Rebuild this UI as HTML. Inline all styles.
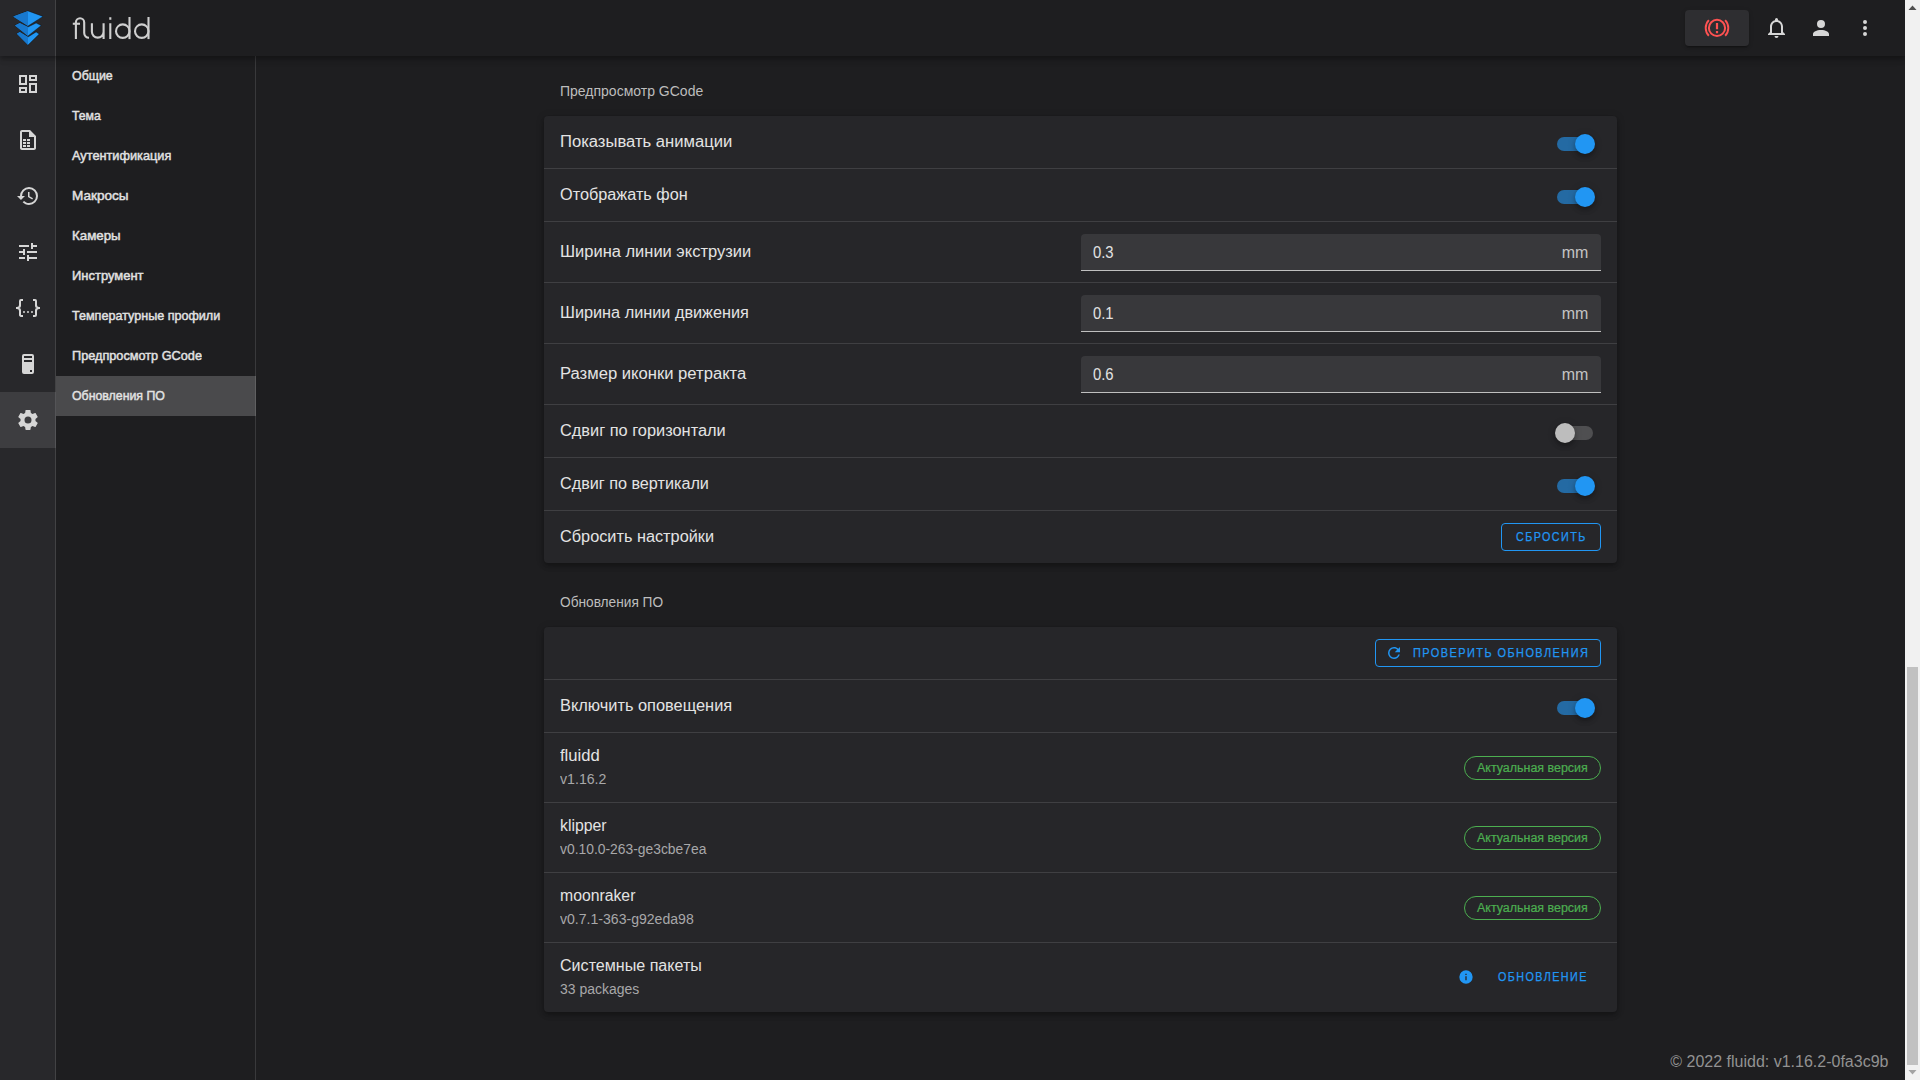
<!DOCTYPE html><html><head><meta charset="utf-8"><style>
*{box-sizing:border-box;margin:0;padding:0}
html,body{width:1920px;height:1080px;overflow:hidden;background:#1e1e20;font-family:"Liberation Sans",sans-serif;color:#e3e3e3}
.abs{position:absolute}
.t{display:inline-block;transform-origin:0 50%;white-space:nowrap}
#appbar{position:absolute;left:0;top:0;width:1905px;height:56px;background:#1e1e20;box-shadow:0 2px 4px -1px rgba(0,0,0,.2),0 4px 5px 0 rgba(0,0,0,.14),0 1px 10px 0 rgba(0,0,0,.12);z-index:5}
#logo{position:absolute;left:0;top:0;width:56px;height:56px;background:#28282b;border-right:1px solid rgba(255,255,255,.12)}
#rail{position:absolute;left:0;top:56px;width:56px;height:1024px;background:#28282b}
.ri{position:absolute;left:0;width:56px;height:56px}
.vb{position:absolute;top:0;width:1px;height:1024px;background:rgba(255,255,255,.12)}
#snav{position:absolute;left:56px;top:56px;width:200px;height:1024px;background:#1e1e20}
.si{position:absolute;left:0;width:200px;height:40px}
.si .tx{position:absolute;left:16px;font-size:13px;line-height:13px;font-weight:normal;-webkit-text-stroke:0.45px #e2e2e2;color:#e2e2e2;letter-spacing:0px;white-space:nowrap}
.si.act{background:#4a4a4c}
.hdr{position:absolute;left:560px;font-size:14px;line-height:14px;color:#bdbdbd;white-space:nowrap}
.card{position:absolute;left:544px;width:1073px;background:#262629;border-radius:4px;box-shadow:0 2px 4px -1px rgba(0,0,0,.2),0 4px 5px 0 rgba(0,0,0,.14),0 1px 10px 0 rgba(0,0,0,.12)}
.dv{position:absolute;left:0;width:1073px;height:1px;background:#3f3f42}
.lbl{position:absolute;left:16px;font-size:16px;line-height:16px;color:#e3e3e3;white-space:nowrap}
.sub{position:absolute;left:16px;font-size:14px;line-height:14px;color:#a8a8a9;white-space:nowrap}
.sw{position:absolute;left:1013px;width:36px;height:20px}
.sw .tr{position:absolute;left:0;top:3px;width:36px;height:14px;border-radius:8px;background:#246aa3}
.sw .th{position:absolute;left:18px;top:0;width:20px;height:20px;border-radius:50%;background:#2196f3;box-shadow:0 2px 4px -1px rgba(0,0,0,.2),0 4px 5px 0 rgba(0,0,0,.14),0 1px 10px 0 rgba(0,0,0,.12)}
.sw.off .tr{background:#4f4f51}
.sw.off .th{left:-2px;background:#bdbdbd}
.tf{position:absolute;left:537px;width:520px;height:37px;background:#38383b;border-radius:4px 4px 0 0;border-bottom:1px solid #bfbfbf}
.tf .v{position:absolute;left:12px;font-size:16px;line-height:16px;color:#e3e3e3;white-space:nowrap}
.tf .u{position:absolute;font-size:16px;line-height:16px;color:#c4c4c4;white-space:nowrap}
.btn{position:absolute;height:28px;border:1px solid #2196f3;border-radius:4px}
.btx{position:absolute;font-size:12px;line-height:12px;color:#2196f3;white-space:nowrap;-webkit-text-stroke:0.25px #2196f3;letter-spacing:1.6px}
.chip{position:absolute;left:920px;width:137px;height:24px;border:1px solid #4caf50;border-radius:12px}
.ctx{position:absolute;font-size:12px;line-height:12px;color:#4caf50;white-space:nowrap;-webkit-text-stroke:0.2px #4caf50}
</style></head><body>
<div id="appbar">
<div id="logo"><svg class="abs" style="left:0;top:0" width="56" height="56" viewBox="0 0 56 56">
<g stroke="rgba(0,0,0,0.35)" stroke-width="1" stroke-linejoin="round">
<path d="M16.8,33.7 L19.8,31.9 L28,37 L36.1,31.9 L39.2,34.1 L28,45.1 Z" fill="#2196f3"/>
<path d="M14.9,25.5 L19.8,23 L28,27 L36.1,23 L41.2,25.5 L28,35.9 Z" fill="#2196f3"/>
<path d="M28,10.9 L43,16.4 L28,26 L13.1,16.4 Z" fill="#2196f3"/>
</g>
<g fill="#1878cd">
<path d="M16.8,33.7 L19.8,31.9 L28,37 L28,45.1 Z"/>
<path d="M14.9,25.5 L19.8,23 L28,27 L28,35.9 Z"/>
<path d="M28,10.9 L13.1,16.4 L28,26 Z"/>
</g>
</svg></div>
<svg class="abs" style="left:0;top:0" width="160" height="56" viewBox="0 0 160 56" fill="none" stroke="#cfcfcf" stroke-width="2.1">
<path d="M75.9,39.1 V22.45 A4.15,4.15 0 0 1 84.2,22.45 V33 A4.8,4.8 0 0 0 89,37.8"/>
<path d="M72.8,23.75 H80"/>
<path d="M91.9,23.2 V31.8 A5.85,5.85 0 0 0 103.6,31.8 M103.6,23.2 V39.1"/>
<path d="M110.3,23.2 V39.1 M110.3,17.2 V19.8"/>
<circle cx="122.75" cy="31.15" r="6.75"/><path d="M129.5,17 V39.1"/>
<circle cx="141.75" cy="31.15" r="6.75"/><path d="M148.5,17 V39.1"/>
</svg>
<div class="abs" style="left:1685px;top:10px;width:64px;height:36px;border-radius:4px;background:#2e2e31;box-shadow:0 3px 1px -2px rgba(0,0,0,.2),0 2px 2px 0 rgba(0,0,0,.14),0 1px 5px 0 rgba(0,0,0,.12)">
<svg class="abs" style="left:20px;top:6px;overflow:visible" width="24" height="24" viewBox="0 0 24 24" fill="none" stroke="#ff5252" stroke-width="2">
<circle cx="12" cy="11.9" r="8.1"/>
<path d="M3.87,4.05 A11.3,11.3 0 0 0 3.87,19.75 M20.13,4.05 A11.3,11.3 0 0 1 20.13,19.75" stroke-width="1.9"/>
<path d="M12,7 V13.2 M12,15.1 V17.2" stroke-width="2.2"/>
</svg></div>
<svg class="abs" style="left:1765px;top:16px" width="24" height="24" viewBox="0 0 24 24"><path fill="#d6d6d6" d="M16,17H7V10.5C7,8 9,6 11.5,6C14,6 16,8 16,10.5M18,16V10.5C18,7.43 15.86,4.86 13,4.18V3.5A1.5,1.5 0 0,0 11.5,2A1.5,1.5 0 0,0 10,3.5V4.18C7.13,4.86 5,7.43 5,10.5V16L3,18V19H20V18M11.5,22A2,2 0 0,0 13.5,20H9.5A2,2 0 0,0 11.5,22Z"/></svg>
<svg class="abs" style="left:1809px;top:16px" width="24" height="24" viewBox="0 0 24 24"><path fill="#d6d6d6" d="M12,4A4,4 0 0,1 16,8A4,4 0 0,1 12,12A4,4 0 0,1 8,8A4,4 0 0,1 12,4M12,14C16.42,14 20,15.79 20,18V20H4V18C4,15.79 7.58,14 12,14Z"/></svg>
<svg class="abs" style="left:1853px;top:16px" width="24" height="24" viewBox="0 0 24 24"><path fill="#d6d6d6" d="M12,16A2,2 0 0,1 14,18A2,2 0 0,1 12,20A2,2 0 0,1 10,18A2,2 0 0,1 12,16M12,10A2,2 0 0,1 14,12A2,2 0 0,1 12,14A2,2 0 0,1 10,12A2,2 0 0,1 12,10M12,4A2,2 0 0,1 14,6A2,2 0 0,1 12,8A2,2 0 0,1 10,6A2,2 0 0,1 12,4Z"/></svg>
</div>
<div id="rail">
<div class="ri" style="top:336px;background:#3d3d40"></div>
<div class="vb" style="left:55px"></div>
<svg class="abs" style="left:16px;top:16px" width="24" height="24" viewBox="0 0 24 24"><path fill="#d6d6d6" d="M19,5V7H15V5H19M9,5V11H5V5H9M19,13V19H15V13H19M9,17V19H5V17H9M21,3H13V9H21V3M11,3H3V13H11V3M21,11H13V21H21V11M11,15H3V21H11V15Z"/></svg>
<svg class="abs" style="left:16px;top:72px" width="24" height="24" viewBox="0 0 24 24"><path fill="#d6d6d6" d="M14,2H6C4.9,2 4,2.9 4,4V20C4,21.1 4.9,22 6,22H18C19.1,22 20,21.1 20,20V8L14,2M18,20H6V4H13V9H18V20M7,11H10V13H7V11M11,11H14V13H11V11M7,14H10V16H7V14M11,14H14V16H11V14M7,17H10V19H7V17M11,17H14V19H11V17Z"/></svg>
<svg class="abs" style="left:16px;top:128px" width="24" height="24" viewBox="0 0 24 24"><path fill="#d6d6d6" d="M13.5,8H12V13L16.28,15.54L17,14.33L13.5,12.25V8M13,3A9,9 0 0,0 4,12H1L4.96,16.03L9,12H6A7,7 0 0,1 13,5A7,7 0 0,1 20,12A7,7 0 0,1 13,19C11.07,19 9.32,18.21 8.06,16.94L6.64,18.36C8.27,20 10.5,21 13,21A9,9 0 0,0 22,12A9,9 0 0,0 13,3"/></svg>
<svg class="abs" style="left:16px;top:184px" width="24" height="24" viewBox="0 0 24 24"><path fill="#d6d6d6" d="M3,17V19H9V17H3M3,5V7H13V5H3M13,21V19H21V17H13V15H11V21H13M7,9V11H3V13H7V15H9V9H7M21,13V11H11V13H21M15,9H17V7H21V5H17V3H15V9Z"/></svg>
<svg class="abs" style="left:16px;top:240px" width="24" height="24" viewBox="0 0 24 24"><path fill="#d6d6d6" d="M5,3H7V5H5V10A2,2 0 0,1 3,12A2,2 0 0,1 5,14V19H7V21H5C3.93,20.73 3,20.1 3,19V15A2,2 0 0,0 1,13H0V11H1A2,2 0 0,0 3,9V5A2,2 0 0,1 5,3M19,3A2,2 0 0,1 21,5V9A2,2 0 0,0 23,11H24V13H23A2,2 0 0,0 21,15V19A2,2 0 0,1 19,21H17V19H19V14A2,2 0 0,1 21,12A2,2 0 0,1 19,10V5H17V3H19M12,15A1,1 0 0,1 13,16A1,1 0 0,1 12,17A1,1 0 0,1 11,16A1,1 0 0,1 12,15M8,15A1,1 0 0,1 9,16A1,1 0 0,1 8,17A1,1 0 0,1 7,16A1,1 0 0,1 8,15M16,15A1,1 0 0,1 17,16A1,1 0 0,1 16,17A1,1 0 0,1 15,16A1,1 0 0,1 16,15Z"/></svg>
<svg class="abs" style="left:16px;top:296px" width="24" height="24" viewBox="0 0 24 24"><path fill="#d6d6d6" d="M8,2H16A2,2 0 0,1 18,4V20A2,2 0 0,1 16,22H8A2,2 0 0,1 6,20V4A2,2 0 0,1 8,2M8,4V6H16V4H8M16,8H8V10H16V8M16,18H14V20H16V18Z"/></svg>
<svg class="abs" style="left:16px;top:352px" width="24" height="24" viewBox="0 0 24 24"><path fill="#d6d6d6" d="M12,15.5A3.5,3.5 0 0,1 8.5,12A3.5,3.5 0 0,1 12,8.5A3.5,3.5 0 0,1 15.5,12A3.5,3.5 0 0,1 12,15.5M19.43,12.97C19.47,12.65 19.5,12.33 19.5,12C19.5,11.67 19.47,11.34 19.43,11L21.54,9.37C21.73,9.22 21.78,8.95 21.66,8.73L19.66,5.27C19.54,5.05 19.27,4.96 19.05,5.05L16.56,6.05C16.04,5.66 15.5,5.32 14.87,5.07L14.5,2.42C14.46,2.18 14.25,2 14,2H10C9.75,2 9.54,2.18 9.5,2.42L9.13,5.07C8.5,5.32 7.96,5.66 7.44,6.05L4.95,5.05C4.73,4.96 4.46,5.05 4.34,5.27L2.34,8.73C2.21,8.95 2.27,9.22 2.46,9.37L4.57,11C4.53,11.34 4.5,11.67 4.5,12C4.5,12.33 4.53,12.65 4.57,12.97L2.46,14.63C2.27,14.78 2.21,15.05 2.34,15.27L4.34,18.73C4.46,18.95 4.73,19.03 4.95,18.95L7.44,17.94C7.96,18.34 8.5,18.68 9.13,18.93L9.5,21.58C9.54,21.82 9.75,22 10,22H14C14.25,22 14.46,21.82 14.5,21.58L14.87,18.93C15.5,18.67 16.04,18.34 16.56,17.94L19.05,18.95C19.27,19.03 19.54,18.95 19.66,18.73L21.66,15.27C21.78,15.05 21.73,14.78 21.54,14.63L19.43,12.97Z"/></svg>
</div>
<div id="snav">
<div class="si" style="top:0px"><div class="tx" style="top:12.9px"><span class="t" style="transform:scaleX(0.9535)">Общие</span></div></div>
<div class="si" style="top:40px"><div class="tx" style="top:12.9px"><span class="t" style="transform:scaleX(0.9424)">Тема</span></div></div>
<div class="si" style="top:80px"><div class="tx" style="top:12.9px"><span class="t" style="transform:scaleX(0.9794)">Аутентификация</span></div></div>
<div class="si" style="top:120px"><div class="tx" style="top:12.9px"><span class="t" style="transform:scaleX(1.0426)">Макросы</span></div></div>
<div class="si" style="top:160px"><div class="tx" style="top:12.9px"><span class="t" style="transform:scaleX(1.0229)">Камеры</span></div></div>
<div class="si" style="top:200px"><div class="tx" style="top:12.9px"><span class="t" style="transform:scaleX(0.9972)">Инструмент</span></div></div>
<div class="si" style="top:240px"><div class="tx" style="top:12.9px"><span class="t" style="transform:scaleX(0.9675)">Температурные профили</span></div></div>
<div class="si" style="top:280px"><div class="tx" style="top:12.9px"><span class="t" style="transform:scaleX(0.9774)">Предпросмотр GCode</span></div></div>
<div class="si act" style="top:320px"><div class="tx" style="top:12.9px"><span class="t" style="transform:scaleX(0.9490)">Обновления ПО</span></div></div>
<div class="vb" style="left:199px"></div>
</div>
<div class="hdr" style="top:83.75px"><span class="t">Предпросмотр GCode</span></div>
<div class="card" style="top:116px;height:447px">
<div class="lbl" style="top:17.76px"><span class="t" style="transform:scaleX(1.0382)">Показывать анимации</span></div>
<div class="sw" style="top:18.0px"><div class="tr"></div><div class="th"></div></div>
<div class="dv" style="top:52px"></div>
<div class="lbl" style="top:70.76px"><span class="t" style="transform:scaleX(1.0160)">Отображать фон</span></div>
<div class="sw" style="top:71.0px"><div class="tr"></div><div class="th"></div></div>
<div class="dv" style="top:105px"></div>
<div class="lbl" style="top:127.76px"><span class="t" style="transform:scaleX(1.0293)">Ширина линии экструзии</span></div>
<div class="tf" style="top:118px"><div class="v" style="top:11.46px"><span class="t" style="transform:scaleX(0.9273)">0.3</span></div><div class="u" style="left:480.7px;top:11.46px"><span class="t">mm</span></div></div>
<div class="dv" style="top:166px"></div>
<div class="lbl" style="top:188.76px"><span class="t" style="transform:scaleX(1.0163)">Ширина линии движения</span></div>
<div class="tf" style="top:179px"><div class="v" style="top:11.46px"><span class="t" style="transform:scaleX(0.9273)">0.1</span></div><div class="u" style="left:480.7px;top:11.46px"><span class="t">mm</span></div></div>
<div class="dv" style="top:227px"></div>
<div class="lbl" style="top:249.76px"><span class="t" style="transform:scaleX(1.0391)">Размер иконки ретракта</span></div>
<div class="tf" style="top:240px"><div class="v" style="top:11.46px"><span class="t" style="transform:scaleX(0.9273)">0.6</span></div><div class="u" style="left:480.7px;top:11.46px"><span class="t">mm</span></div></div>
<div class="dv" style="top:288px"></div>
<div class="lbl" style="top:306.76px"><span class="t" style="transform:scaleX(1.0228)">Сдвиг по горизонтали</span></div>
<div class="sw off" style="top:307.0px"><div class="tr"></div><div class="th"></div></div>
<div class="dv" style="top:341px"></div>
<div class="lbl" style="top:359.76px"><span class="t" style="transform:scaleX(1.0116)">Сдвиг по вертикали</span></div>
<div class="sw" style="top:360.0px"><div class="tr"></div><div class="th"></div></div>
<div class="dv" style="top:394px"></div>
<div class="lbl" style="top:412.76px"><span class="t" style="transform:scaleX(1.0179)">Сбросить настройки</span></div>
<div class="btn" style="left:957px;top:407px;width:100px"><div class="btx" style="left:14.25px;top:7.24px"><span class="t" style="transform:scaleX(0.8961)">СБРОСИТЬ</span></div></div>
</div>
<div class="hdr" style="top:595.25px"><span class="t" style="transform:scaleX(0.9771)">Обновления ПО</span></div>
<div class="card" style="top:627px;height:385px">
<div class="btn" style="left:831px;top:12px;width:226px"><svg class="abs" style="left:8.9px;top:4.25px" width="18" height="18" viewBox="0 0 24 24"><path fill="#2196f3" d="M17.65,6.35C16.2,4.9 14.21,4 12,4A8,8 0 0,0 4,12A8,8 0 0,0 12,20C15.73,20 18.84,17.45 19.73,14H17.65C16.83,16.33 14.61,18 12,18A6,6 0 0,1 6,12A6,6 0 0,1 12,6C13.66,6 15.14,6.69 16.22,7.78L13,11H20V4L17.65,6.35Z"/></svg><div class="btx" style="left:36.5px;top:7.24px"><span class="t" style="transform:scaleX(0.9097)">ПРОВЕРИТЬ ОБНОВЛЕНИЯ</span></div></div>
<div class="dv" style="top:52px"></div>
<div class="lbl" style="top:70.76px"><span class="t" style="transform:scaleX(1.0234)">Включить оповещения</span></div>
<div class="sw" style="top:71px"><div class="tr"></div><div class="th"></div></div>
<div class="dv" style="top:105px"></div>
<div class="lbl" style="top:121.16px"><span class="t" style="transform:scaleX(1.0395)">fluidd</span></div>
<div class="sub" style="top:144.85px"><span class="t" style="transform:scaleX(1.0109)">v1.16.2</span></div>
<div class="chip" style="top:129px"><div class="ctx" style="left:12.1px;top:4.94px"><span class="t" style="transform:scaleX(1.0377)">Актуальная версия</span></div></div>
<div class="dv" style="top:175px"></div>
<div class="lbl" style="top:191.16px"><span class="t" style="transform:scaleX(0.9894)">klipper</span></div>
<div class="sub" style="top:214.85px"><span class="t" style="transform:scaleX(0.9899)">v0.10.0-263-ge3cbe7ea</span></div>
<div class="chip" style="top:199px"><div class="ctx" style="left:12.1px;top:4.94px"><span class="t" style="transform:scaleX(1.0377)">Актуальная версия</span></div></div>
<div class="dv" style="top:245px"></div>
<div class="lbl" style="top:261.16px"><span class="t" style="transform:scaleX(0.9857)">moonraker</span></div>
<div class="sub" style="top:284.85px"><span class="t" style="transform:scaleX(1.0045)">v0.7.1-363-g92eda98</span></div>
<div class="chip" style="top:269px"><div class="ctx" style="left:12.1px;top:4.94px"><span class="t" style="transform:scaleX(1.0377)">Актуальная версия</span></div></div>
<div class="dv" style="top:315px"></div>
<div class="lbl" style="top:331.16px"><span class="t" style="transform:scaleX(1.0050)">Системные пакеты</span></div>
<div class="sub" style="top:354.85px"><span class="t" style="transform:scaleX(0.9975)">33 packages</span></div>
<svg class="abs" style="left:914px;top:342px" width="16" height="16" viewBox="0 0 24 24"><path fill="#2196f3" d="M13,9H11V7H13M13,17H11V11H13M12,2A10,10 0 0,0 2,12A10,10 0 0,0 12,22A10,10 0 0,0 22,12A10,10 0 0,0 12,2Z"/></svg>
<div class="btx" style="left:954.3px;top:343.94px"><span class="t" style="transform:scaleX(0.8960)">ОБНОВЛЕНИЕ</span></div>
</div>
<div class="abs" style="left:1670.3px;top:1054.26px;font-size:16px;line-height:16px;color:#929292;white-space:nowrap"><span class="t">© 2022 fluidd: v1.16.2-0fa3c9b</span></div>
<div class="abs" style="left:1905px;top:0;width:15px;height:1080px;background:#f1f1f1;z-index:10">
<div class="abs" style="left:2px;top:667px;width:11px;height:398px;background:#c1c1c1"></div>
<svg class="abs" style="left:0;top:0" width="15" height="15"><path d="M3.5,10 L7.5,5.5 L11.5,10 Z" fill="#505050"/></svg>
<svg class="abs" style="left:0;top:1065px" width="15" height="15"><path d="M3.5,5 L7.5,9.5 L11.5,5 Z" fill="#a3a3a3"/></svg>
</div>
</body></html>
